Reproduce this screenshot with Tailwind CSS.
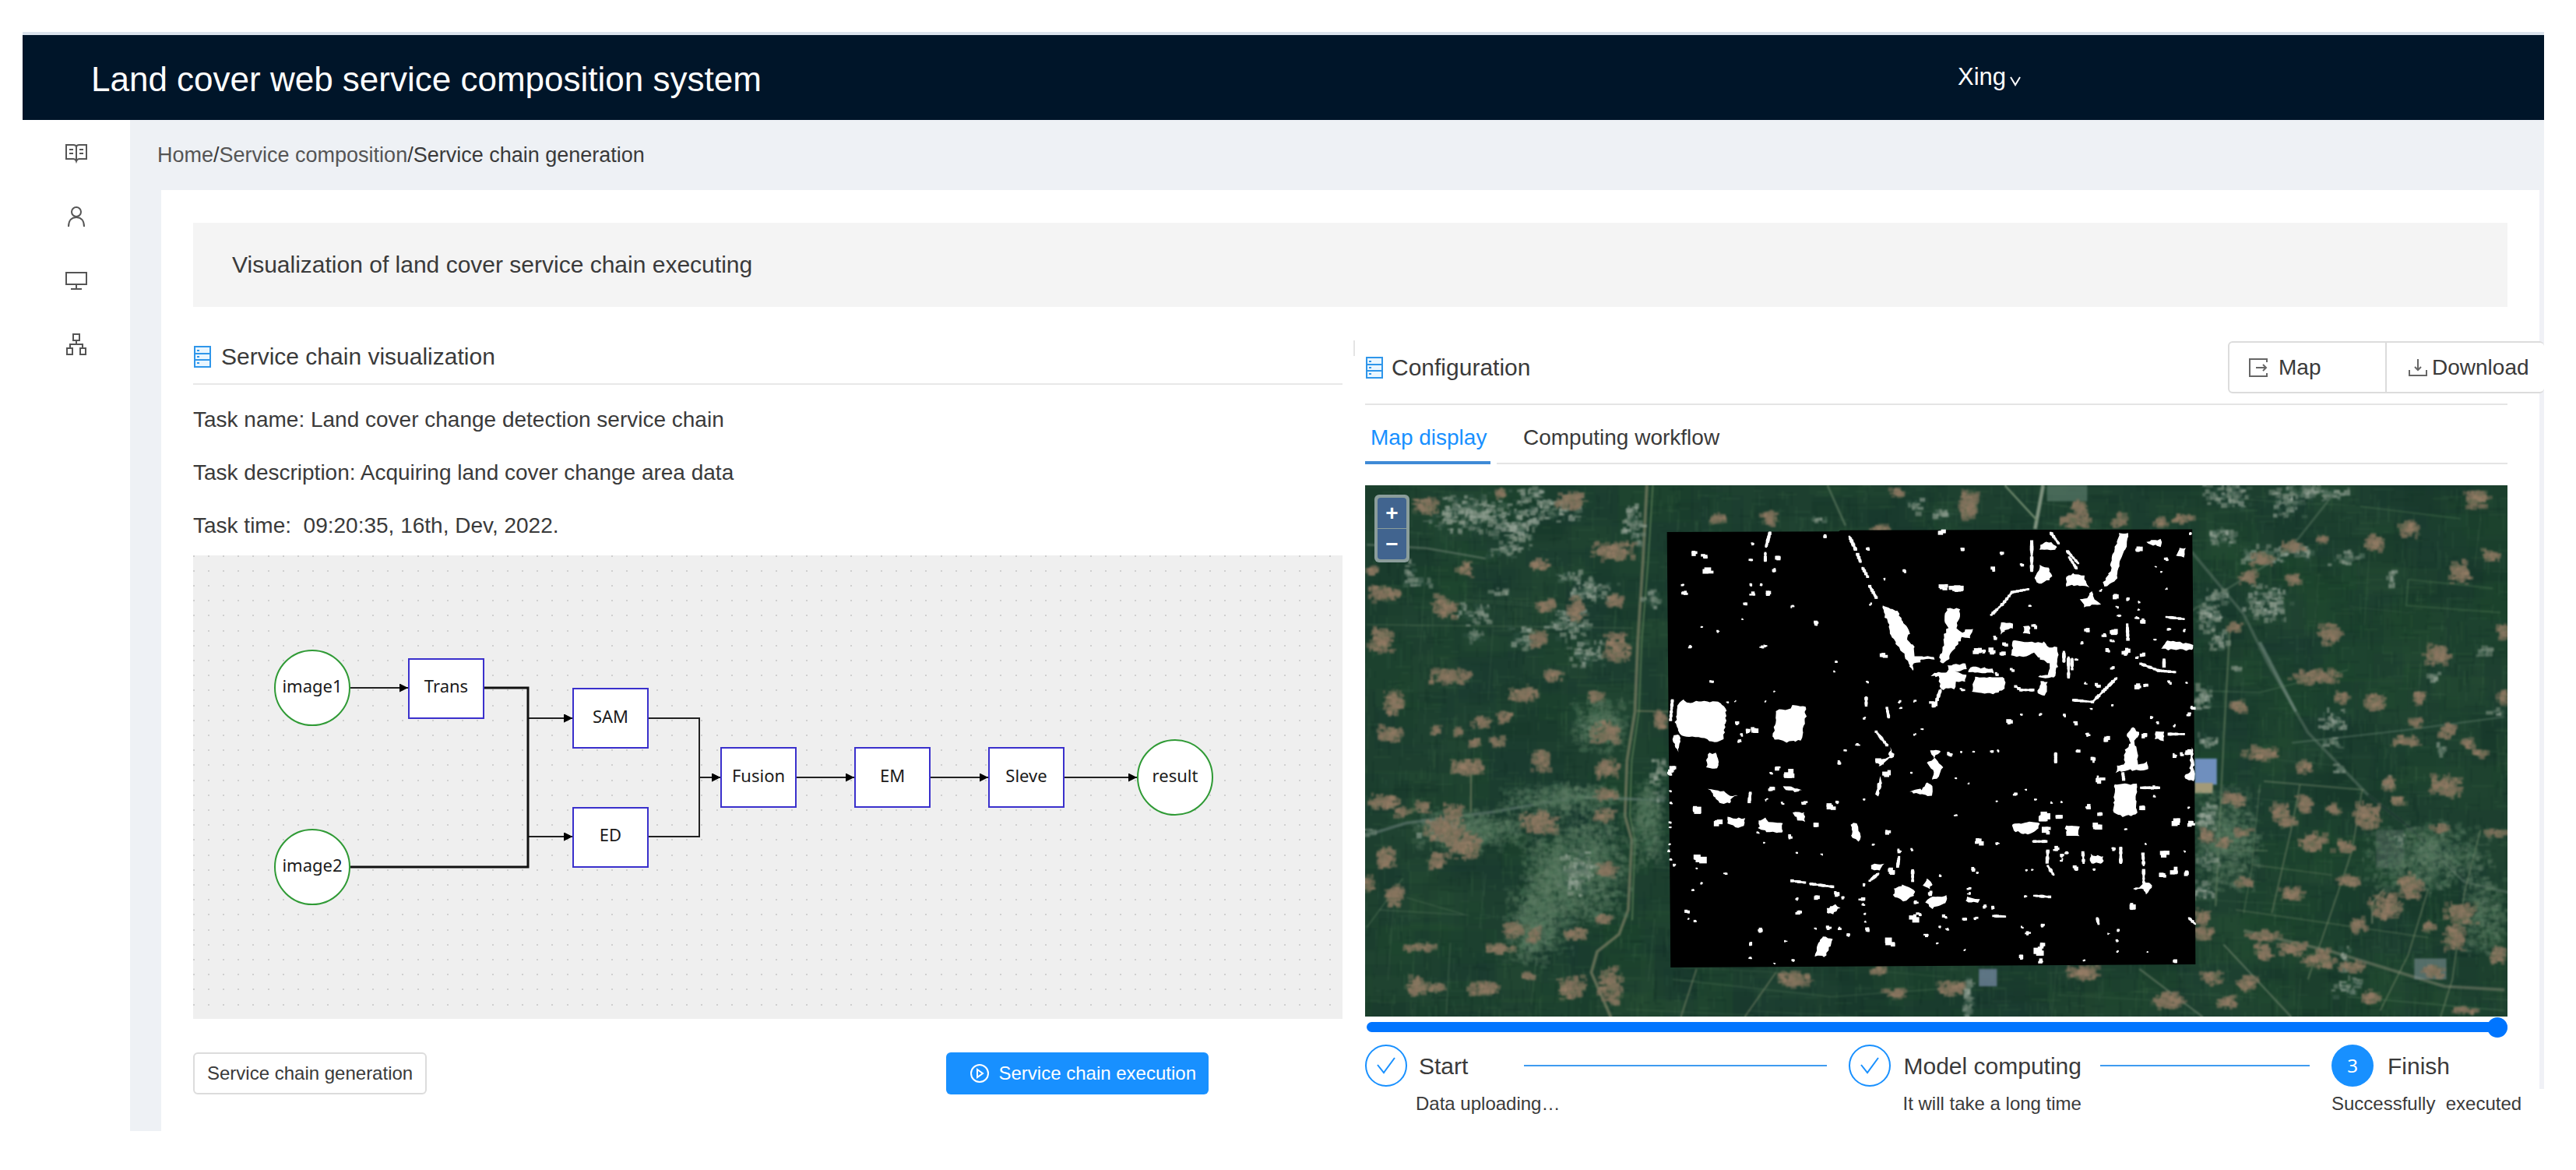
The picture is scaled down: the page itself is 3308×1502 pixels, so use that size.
<!DOCTYPE html>
<html lang="en">
  <head>
    <meta charset="UTF-8" />
    <meta name="viewport" content="width=device-width, initial-scale=1.0" />
    <title>Land cover web service composition system</title>
    <script src="https://cdn.jsdelivr.net/npm/@tailwindcss/browser@4"></script>
  </head>
  <body
    class="bg-white pt-[41px] pr-[41px] pl-[29px] font-['Liberation_Sans',Arial,sans-serif] text-[#3a3a3a]"
  >
    <header
      class="flex h-[113px] items-center justify-between border-t-4 border-[#dbe3ec] bg-[#001529] pr-[671px] pl-[88px] text-white"
    >
      <h1 class="pt-1 text-[44px]">Land cover web service composition system</h1>
      <button type="button" class="flex items-center gap-1 text-[31px]">
        Xing
        <svg class="mt-2 h-4 w-4" viewBox="0 0 16 16" fill="none" stroke="currentColor" stroke-width="2">
          <path d="M2 3l6 10 6-10" />
        </svg>
      </button>
    </header>

    <div class="flex">
      <!-- Sidebar -->
      <nav class="flex w-[138px] shrink-0 flex-col items-center gap-[54px] pt-7 text-[#555]">
        <a href="#" aria-label="Catalog">
          <svg class="size-7" viewBox="0 0 28 28" fill="none" stroke="currentColor" stroke-width="2">
            <path d="M1 4h9q4 0 4 3q0-3 4-3h9v18h-9q-3 0-4 3q-1-3-4-3H1zM14 7v17M5 10h5M5 15h5M18 10h5M18 15h5" />
          </svg>
        </a>
        <a href="#" aria-label="Users">
          <svg class="size-7" viewBox="0 0 28 28" fill="none" stroke="currentColor" stroke-width="2">
            <circle cx="14" cy="8" r="6" />
            <path d="M4 27c0-8 4-12 10-12s10 4 10 12" />
          </svg>
        </a>
        <a href="#" aria-label="Monitor">
          <svg class="size-7" viewBox="0 0 28 28" fill="none" stroke="currentColor" stroke-width="2">
            <path d="M1 4h26v15H1zM14 19v6M7 25h14" />
          </svg>
        </a>
        <a href="#" aria-label="Services">
          <svg class="size-7" viewBox="0 0 28 28" fill="none" stroke="currentColor" stroke-width="2">
            <path d="M10 1h8v8h-8zM2 19h7v8H2zM19 19h7v8h-7zM14 9v5M6 19v-5h16v5" />
          </svg>
        </a>
      </nav>

      <div class="min-w-0 flex-1">
        <div class="flex h-[90px] items-center bg-[#eef1f5] pl-[35px] text-[27px]">
          <a href="#" class="text-[#555]">Home</a>/<a href="#" class="text-[#555]">Service composition</a>/<span>Service chain generation</span>
        </div>

        <div class="flex">
          <div class="w-10 shrink-0 bg-[#eef1f5]"></div>
          <main class="min-w-0 flex-1 px-[41px] pt-[42px] pb-[21px]">
            <h2 class="bg-[#f4f4f4] px-[50px] text-[30px] leading-[108px]">
              Visualization of land cover service chain executing
            </h2>

            <div class="grid grid-cols-[1476fr_1467fr] gap-[29px]">
              <!-- Service chain -->
              <section class="min-w-0">
                <h3 class="flex items-center gap-3 border-b-2 border-[#e8e8e8] pt-[46px] pb-4 text-[30px] leading-9">
                  <svg class="h-7 w-6" viewBox="0 0 24 28" fill="none" stroke="#2f96ea" stroke-width="2">
                    <path d="M2 1h20v26H2zM2 10h20M2 18h20" fill="#eaf6ff" />
                    <path d="M5 6h3M5 14h3M5 22h3" />
                  </svg>
                  Service chain visualization
                </h3>
                <div class="pt-[11px] pb-1 text-[28px] leading-[68px]">
                  <p>Task name: Land cover change detection service chain</p>
                  <p>Task description: Acquiring land cover change area data</p>
                  <p>Task time:&nbsp; 09:20:35, 16th, Dev, 2022.</p>
                </div>
                <svg
                  class="block w-full font-['Noto_Sans',sans-serif] text-[22px]"
                  viewBox="0 0 1476 595"
                >
                  <defs>
                    <pattern id="dots" width="96" height="96" patternUnits="userSpaceOnUse">
                      <path
                        d="M0 1h96M0 20h96M0 39h96M0 58h96M0 77h96"
                        stroke="#cfcfcf"
                        stroke-width="2"
                        stroke-dasharray="2 17 2 17 2 17 2 17 2 18"
                      />
                    </pattern>
                    <marker id="arrow" viewBox="0 0 10 10" refX="10" refY="5" markerWidth="11" markerHeight="11" markerUnits="userSpaceOnUse" orient="auto">
                      <path d="M0 0L10 5L0 10z" />
                    </marker>
                  </defs>
                  <rect width="1476" height="595" fill="#efefef" />
                  <rect width="1476" height="595" fill="url(#dots)" />
                  <g fill="none" stroke="#222" stroke-width="2" marker-end="url(#arrow)">
                    <path d="M202 170H276" />
                    <path d="M373 170H430V209H487" />
                    <path d="M373 170H430V361H487" />
                    <path d="M202 400H430V209H487" />
                    <path d="M202 400H430V361H487" />
                    <path d="M584 209H650V285H677" />
                    <path d="M584 361H650V285H677" />
                    <path d="M774 285H849" />
                    <path d="M946 285H1021" />
                    <path d="M1118 285H1212" />
                  </g>
                  <path d="M373 170H430V400H202" fill="none" stroke="#111" stroke-width="3" />
                  <g fill="#fff" stroke="#2f9a35" stroke-width="2">
                    <circle cx="153" cy="170" r="48" />
                    <circle cx="153" cy="400" r="48" />
                    <circle cx="1261" cy="285" r="48" />
                  </g>
                  <g fill="#fff" stroke="#3a30cc" stroke-width="2">
                    <rect x="277" y="133" width="96" height="76" />
                    <rect x="488" y="171" width="96" height="76" />
                    <rect x="488" y="324" width="96" height="76" />
                    <rect x="678" y="247" width="96" height="76" />
                    <rect x="850" y="247" width="96" height="76" />
                    <rect x="1022" y="247" width="96" height="76" />
                  </g>
                  <g text-anchor="middle" fill="#1a1a1a">
                    <text x="153" y="176">image1</text>
                    <text x="153" y="406">image2</text>
                    <text x="325" y="176">Trans</text>
                    <text x="536" y="215">SAM</text>
                    <text x="536" y="367">ED</text>
                    <text x="726" y="291">Fusion</text>
                    <text x="898" y="291">EM</text>
                    <text x="1070" y="291">Sleve</text>
                    <text x="1261" y="291">result</text>
                  </g>
                </svg>
                <div class="mt-[43px] flex justify-between pr-[172px] text-[24px]">
                  <button type="button" class="h-[54px] rounded-md border-2 border-[#dcdcdc] px-4">
                    Service chain generation
                  </button>
                  <button type="button" class="flex h-[54px] items-center gap-3 rounded-md bg-[#1890ff] pr-4 pl-[30px] text-white">
                    <svg class="size-[26px]" viewBox="0 0 26 26" fill="none" stroke="currentColor" stroke-width="2">
                      <circle cx="13" cy="13" r="11" />
                      <path d="M10 8l7 5-7 5z" />
                    </svg>
                    Service chain execution
                  </button>
                </div>
              </section>

              <!-- Configuration -->
              <section class="relative min-w-0">
                <span class="absolute top-[43px] -left-[15px] h-5 w-[2px] bg-[#e4e4e4]"></span>
                <div class="flex items-center justify-between border-b-2 border-[#e4e4e4] pt-11 pb-[13px]">
                  <h3 class="flex items-center gap-[10px] text-[30px]">
                    <svg class="h-7 w-6" viewBox="0 0 24 28" fill="none" stroke="#2f96ea" stroke-width="2">
                      <path d="M2 1h20v26H2zM2 10h20M2 18h20" fill="#eaf6ff" />
                      <path d="M5 6h3M5 14h3M5 22h3" />
                    </svg>
                    Configuration
                  </h3>
                  <div class="relative -mr-[47px] flex h-[67px] text-[28px]">
                    <button type="button" class="flex w-[204px] items-center gap-[14px] rounded-l-md border-2 border-[#dcdcdc] bg-white pl-[25px]">
                      <svg class="size-6" viewBox="0 0 24 24" fill="none" stroke="#666" stroke-width="2">
                        <path d="M23 5V1H1v22h22v-4M9 12h13M18 8l4 4-4 4" />
                      </svg>
                      Map
                    </button>
                    <button type="button" class="flex w-[202px] items-center gap-[6px] rounded-r-md border-y-2 border-[#dcdcdc] bg-white pl-7">
                      <svg class="size-6" viewBox="0 0 24 24" fill="none" stroke="#666" stroke-width="2">
                        <path d="M12 1v14M8 11l4 4 4-4M1 15v7h22v-7" />
                      </svg>
                      Download
                    </button>
                  </div>
                </div>

                <nav class="flex text-[28px] leading-9">
                  <a href="#" class="w-[161px] border-b-4 border-[#3f8ad6] pt-6 pb-3 pl-[7px] whitespace-nowrap text-[#1890ff]">Map display</a>
                  <div class="ml-2 flex-1 border-b-2 border-[#e4e4e4] pt-6 pl-[34px]">
                    <a href="#">Computing workflow</a>
                  </div>
                </nav>

                <div class="relative mt-[27px]">
                  <canvas id="map" class="block w-full" width="1467" height="682"></canvas>
                  <div class="absolute top-3 left-3 flex w-[45px] flex-col gap-px rounded-md bg-[#8b9d9b] p-1 text-[28px] leading-[38px] font-bold text-white">
                    <button type="button" class="h-[39px] rounded-t-sm bg-[#41648f]">+</button>
                    <button type="button" class="h-[39px] rounded-b-sm bg-[#41648f]">−</button>
                  </div>
                </div>

                <input
                  type="range"
                  aria-label="Progress"
                  value="100"
                  class="mt-[7px] ml-[2px] block h-[13px] w-[calc(100%-2px)] appearance-none rounded-full bg-[#0075ff] [&::-webkit-slider-thumb]:size-[26px] [&::-webkit-slider-thumb]:appearance-none [&::-webkit-slider-thumb]:rounded-full [&::-webkit-slider-thumb]:bg-[#0075ff]"
                />

                <ol class="mt-4 flex text-[30px] whitespace-nowrap">
                  <li class="flex-1">
                    <div class="flex items-center">
                      <svg class="size-[54px]" viewBox="0 0 54 54" fill="none" stroke="#1890ff" stroke-width="2">
                        <circle cx="27" cy="27" r="26" />
                        <path d="M16 26l8 10 14-19" />
                      </svg>
                      <span class="ml-[15px]">Start</span>
                      <span class="mr-7 ml-[72px] h-[2px] flex-1 bg-[#3f9bf0]"></span>
                    </div>
                    <p class="mt-2 pl-[65px] text-[24px] leading-7">Data uploading…</p>
                  </li>
                  <li class="flex-1">
                    <div class="flex items-center">
                      <svg class="size-[54px]" viewBox="0 0 54 54" fill="none" stroke="#1890ff" stroke-width="2">
                        <circle cx="27" cy="27" r="26" />
                        <path d="M16 26l8 10 14-19" />
                      </svg>
                      <span class="ml-[17px]">Model computing</span>
                      <span class="mr-7 ml-6 h-[2px] flex-1 bg-[#3f9bf0]"></span>
                    </div>
                    <p class="mt-2 pl-[70px] text-[24px] leading-7">It will take a long time</p>
                  </li>
                  <li class="w-[226px]">
                    <div class="flex items-center">
                      <span class="flex size-[54px] items-center justify-center rounded-full bg-[#1890ff] font-['Noto_Sans',sans-serif] text-[24px] text-white">3</span>
                      <span class="ml-[18px]">Finish</span>
                    </div>
                    <p class="mt-2 text-[24px] leading-7">Successfully&nbsp; executed</p>
                  </li>
                </ol>
              </section>
            </div>
          </main>
          <div class="mb-[54px] w-[6px] shrink-0 bg-[#f0f1f6]"></div>
        </div>
      </div>
    </div>

    <script>
      const canvas = document.getElementById("map");
      const ctx = canvas.getContext("2d");

      // Seeded generator, so the imagery is the same on every load
      let seed = 7;
      function rnd() {
        seed = (seed * 16807) % 2147483647;
        return seed / 2147483647;
      }

      function line(points, color, width) {
        ctx.strokeStyle = color;
        ctx.lineWidth = width;
        ctx.beginPath();
        for (let i = 0; i < points.length; i += 2) ctx.lineTo(points[i], points[i + 1]);
        ctx.stroke();
      }

      // Cluster of small roofs, denser towards its centre
      function cluster([x, y, w, h], colors, density) {
        const n = Math.max(10, (w * h * density) / 45);
        for (let i = 0; i < n; i++) {
          ctx.fillStyle = colors[Math.floor(rnd() * colors.length)];
          const cw = 5 + rnd() * 13;
          const ch = 5 + rnd() * 12;
          const cx = x + (rnd() + rnd() - 1) * w * 0.55;
          const cy = y + (rnd() + rnd() - 1) * h * 0.55;
          ctx.fillRect(cx - cw / 2, cy - ch / 2, cw, ch);
        }
      }

      const brown = ["#8a755f80", "#917a6480", "#7f705b80", "#756b5680", "#9a7f6880", "#84755f80", "#5f6b5060"];
      const grey = ["#73877690", "#8a9a8a90", "#61786a80", "#a0aba090", "#4c6c5870", "#2c4f3f80"];
      const haze = ["#4f755c38", "#5e806538", "#47685038", "#6d8a7038"];

      // Farmland
      ctx.fillStyle = "#1d3f2f";
      ctx.fillRect(0, 0, 1467, 682);
      for (let i = 0; i < 1000; i++) {
        ctx.fillStyle = ["#16352b50", "#22493240", "#183a3050", "#28503540", "#1b472a40"][i % 5];
        ctx.fillRect(rnd() * 1500 - 40, rnd() * 720 - 40, 20 + rnd() * 80, 15 + rnd() * 60);
      }
      for (let i = 0; i < 6000; i++) {
        ctx.fillStyle = ["#3a664a38", "#0f2c2240", "#44704c30", "#13352840"][i % 4];
        const long = 6 + rnd() * 22;
        if (rnd() < 0.65) ctx.fillRect(rnd() * 1467, rnd() * 682, 2, long);
        else ctx.fillRect(rnd() * 1467, rnd() * 682, long, 2);
      }
      for (let i = 0; i < 60; i++) {
        const x = rnd() * 1467;
        const y = rnd() * 682;
        if (rnd() < 0.5) line([x, y, x - 8, y + 60 + rnd() * 90], "#56795a50", 1);
        else line([x, y, x + 60 + rnd() * 110, y + 8], "#56795a50", 1);
      }

      // West tile
      ctx.setTransform(0.51, 0, 0, 0.4464, -13, -13);
      line([735, 30, 725, 250, 712, 480, 705, 680, 685, 820, 680, 980, 697, 1050, 688, 1250, 665, 1320, 610, 1370, 595, 1430, 645, 1560], "#7d8064b0", 8);
      line([750, 30, 738, 250, 722, 480, 715, 680, 697, 820, 692, 980, 705, 1050, 698, 1280], "#4c6f4c", 4);
      line([30, 1035, 130, 1000, 350, 968, 560, 925, 780, 935], "#71868280", 9);
      line([30, 200, 180, 210, 330, 240], "#81918170", 6);
      line([30, 430, 400, 435, 700, 440], "#62806070", 3);
      line([1190, 30, 1235, 145], "#6e886c90", 5);
      line([292, 860, 292, 970], "#8a8a6a90", 4);
      line([710, 678, 790, 680], "#8a8a6aa0", 4);
      line([130, 1215, 280, 1265, 60, 1250], "#64836460", 3);
      line([30, 1300, 120, 1160], "#64836470", 3);
      line([240, 1345, 230, 1550], "#64836460", 3);
      line([860, 1420, 820, 1560], "#8b927280", 4);
      line([1060, 1430, 980, 1560], "#8b927280", 4);
      line([800, 1450, 1200, 1500, 1560, 1470], "#5e806060", 3);
      [[490, 1200, 140, 340], [580, 1130, 220, 320], [620, 720, 140, 160], [440, 1300, 120, 220], [740, 1000, 80, 260], [520, 930, 300, 90], [300, 1020, 300, 120]].forEach((b) => cluster(b, haze, 1));
      [
        [400, 150, 120, 130], [370, 215, 90, 50], [160, 310, 80, 40], [140, 280, 30, 80], [300, 400, 90, 60],
        [440, 60, 110, 50], [540, 290, 60, 50], [360, 335, 60, 20], [750, 360, 50, 60], [700, 140, 50, 130],
        [250, 125, 160, 60], [540, 430, 110, 100], [600, 330, 120, 80], [590, 520, 100, 80], [420, 470, 70, 70],
        [1410, 90, 60, 40], [1480, 110, 60, 30], [1170, 130, 40, 15], [40, 1030, 60, 30], [210, 1020, 110, 60],
        [765, 850, 40, 90], [560, 1150, 90, 140], [300, 460, 60, 40], [1545, 1500, 25, 130], [770, 920, 30, 40],
        [300, 110, 180, 120], [500, 100, 150, 80],
      ].forEach((b) => cluster(b, grey, 0.35));
      [
        [180, 90, 60, 50], [370, 50, 30, 30], [545, 75, 70, 50], [915, 125, 40, 30], [1045, 125, 40, 45],
        [1365, 50, 35, 25], [1545, 85, 45, 70], [650, 220, 110, 55], [275, 270, 40, 45], [465, 260, 50, 35],
        [45, 275, 25, 30], [75, 340, 80, 45], [230, 380, 65, 65], [480, 375, 55, 30], [558, 385, 45, 70],
        [655, 362, 40, 35], [65, 475, 60, 75], [465, 470, 45, 50], [660, 495, 65, 90], [240, 580, 110, 40],
        [500, 575, 50, 35], [425, 630, 80, 45], [605, 637, 45, 35], [98, 655, 50, 75], [375, 697, 35, 30],
        [318, 710, 50, 35], [205, 733, 28, 28], [260, 740, 22, 28], [88, 745, 65, 45], [630, 740, 75, 65],
        [360, 767, 40, 30], [300, 770, 35, 25], [470, 820, 45, 60], [280, 840, 85, 50], [635, 845, 60, 55],
        [75, 940, 80, 45], [120, 970, 40, 30], [165, 955, 40, 30], [250, 970, 50, 50], [225, 1020, 100, 70],
        [275, 1065, 90, 80], [465, 1000, 100, 65], [75, 1100, 50, 65], [205, 1110, 40, 50], [635, 1135, 50, 45],
        [630, 980, 50, 40], [35, 1175, 25, 50], [100, 1210, 45, 60], [630, 1280, 40, 30], [398, 1308, 50, 45],
        [450, 1320, 35, 50], [555, 1320, 60, 35], [170, 1358, 90, 25], [360, 1362, 90, 25], [440, 1440, 35, 20],
        [325, 1475, 75, 45], [155, 1470, 50, 60], [205, 1475, 50, 25], [550, 1475, 70, 70], [645, 1470, 60, 100],
        [1105, 1450, 95, 45], [1320, 1425, 55, 25], [1360, 1490, 60, 30], [1500, 1475, 65, 40], [770, 705, 35, 50],
        [1325, 150, 50, 20], [635, 920, 60, 30],
      ].forEach((b) => cluster(b, brown, 1.1));

      // East tile
      ctx.setTransform(0.5153, 0, 0, 0.4464, 747, -13);
      line([610, 220, 740, 400, 800, 540, 900, 740, 1050, 920, 1150, 1010, 1290, 1170, 1400, 1200], "#5f786a80", 8);
      line([780, 480, 870, 680], "#839a9080", 8);
      line([1050, 920, 1150, 1010, 1290, 1160], "#1d3a30", 7);
      line([240, 30, 220, 155], "#7f927f", 9);
      line([145, 30, 225, 130], "#6e886c", 5);
      line([610, 390, 850, 220, 960, 60], "#6c877060", 6);
      line([705, 450, 690, 760, 670, 1240], "#728a6880", 5);
      line([620, 620, 780, 625, 1000, 560], "#5e806070", 3);
      line([860, 770, 1130, 735, 1390, 695], "#5e7c6980", 5);
      line([790, 880, 1040, 905], "#74876c80", 5);
      line([1150, 300, 1145, 375, 1380, 395], "#53795570", 4);
      line([1150, 300, 1360, 325], "#53795570", 4);
      line([1030, 90, 1280, 125], "#53795570", 4);
      line([880, 890, 860, 1010, 810, 1260], "#7a8a6a80", 4);
      line([1035, 905, 1010, 1080, 960, 1250, 900, 1450], "#7a8a6a80", 4);
      line([780, 890, 760, 1130, 740, 1260], "#6c836470", 3);
      line([1200, 1190, 1150, 1380, 1080, 1540], "#7a8a6a80", 4);
      line([1330, 1020, 1290, 1200, 1260, 1450, 1230, 1560], "#7a8a6a80", 4);
      line([760, 1120, 960, 1150], "#6c836480", 3);
      line([690, 1080, 800, 1080], "#6c836480", 4);
      line([720, 1250, 1200, 1330], "#6c836480", 3);
      line([690, 1350, 860, 1560], "#7f8f7780", 5);
      line([480, 1420, 640, 1560], "#7f8f7780", 5);
      line([740, 1310, 960, 1370, 1240, 1470, 1390, 1480], "#84887280", 9);
      line([1000, 1500, 1390, 1540], "#5e806080", 3);
      line([1060, 1290, 1060, 1230, 1090, 1190], "#90967c80", 5);
      ctx.fillStyle = "#4d5d5890";
      ctx.fillRect(1070, 1020, 70, 110);
      ctx.fillStyle = "#7f919690";
      ctx.fillRect(1165, 1390, 80, 60);
      ctx.fillStyle = "#6f8fbe";
      ctx.fillRect(618, 815, 55, 75);
      ctx.fillStyle = "#a39a78";
      ctx.fillRect(618, 885, 45, 30);
      ctx.fillStyle = "#8594b8a0";
      ctx.fillRect(80, 1420, 45, 50);
      ctx.fillStyle = "#5f7f70a0";
      ctx.fillRect(250, 30, 100, 45);
      [[1340, 1270, 110, 220], [1200, 1100, 300, 200], [700, 1050, 160, 300]].forEach((b) => cluster(b, haze, 0.8));
      [
        [920, 50, 160, 50], [850, 80, 80, 90], [690, 180, 90, 50], [800, 370, 120, 110], [650, 400, 60, 110],
        [790, 230, 110, 60], [880, 220, 80, 40], [640, 640, 50, 80], [650, 765, 50, 40], [960, 770, 40, 35],
        [980, 845, 35, 25], [960, 705, 80, 60], [680, 480, 50, 60], [720, 555, 25, 20], [1210, 580, 40, 30],
        [1110, 300, 20, 60], [650, 980, 60, 80], [1370, 680, 45, 25], [1130, 1050, 25, 60], [640, 1200, 50, 70],
        [700, 60, 120, 80], [1230, 790, 20, 30], [1100, 885, 25, 40], [650, 1110, 60, 60], [1000, 1470, 70, 60],
        [1000, 240, 90, 40], [1340, 510, 40, 40], [990, 1390, 30, 80], [680, 350, 60, 50], [50, 1520, 30, 90],
      ].forEach((b) => cluster(b, grey, 0.4));
      [
        [55, 85, 45, 85], [320, 130, 80, 40], [330, 90, 40, 35], [430, 130, 35, 40], [530, 135, 40, 25],
        [590, 125, 50, 25], [1320, 70, 65, 50], [1155, 155, 50, 50], [1065, 195, 50, 50], [935, 185, 30, 25],
        [860, 205, 60, 30], [785, 240, 60, 40], [750, 295, 50, 40], [862, 298, 40, 30], [1280, 280, 50, 65],
        [1355, 230, 40, 35], [955, 455, 60, 60], [1225, 515, 65, 60], [1385, 450, 30, 50], [920, 580, 130, 40],
        [718, 440, 35, 30], [730, 665, 50, 35], [1068, 655, 50, 55], [985, 640, 35, 40], [1178, 640, 30, 40],
        [1385, 640, 25, 40], [1170, 712, 35, 25], [1248, 735, 40, 45], [1145, 765, 80, 30], [1298, 772, 30, 30],
        [1330, 800, 40, 20], [780, 800, 85, 40], [890, 840, 40, 35], [1245, 895, 80, 65], [1102, 885, 30, 45],
        [1125, 935, 40, 25], [715, 932, 65, 38], [890, 945, 40, 50], [830, 970, 45, 60], [850, 1000, 50, 30],
        [965, 960, 35, 30], [1050, 980, 70, 75], [1230, 1015, 45, 25], [910, 1055, 70, 55], [990, 1070, 55, 40],
        [645, 1035, 45, 40], [690, 1060, 35, 30], [735, 1030, 50, 25], [1370, 1030, 60, 25], [740, 1170, 50, 30],
        [1000, 1170, 60, 35], [1155, 1185, 60, 80], [1095, 1240, 80, 70], [860, 1205, 60, 35], [1025, 1295, 45, 45],
        [1280, 1260, 80, 60], [1265, 1330, 50, 80], [1205, 1300, 30, 30], [635, 1270, 40, 50], [640, 1320, 50, 40],
        [790, 1325, 90, 30], [790, 1370, 45, 45], [860, 1360, 80, 40], [930, 1390, 80, 50], [1010, 1415, 60, 30],
        [1375, 1380, 40, 50], [660, 1445, 50, 40], [750, 1460, 50, 45], [700, 1515, 50, 35], [550, 1510, 80, 45],
        [340, 1430, 90, 40], [1055, 1500, 45, 40], [1290, 1540, 60, 20], [20, 1475, 40, 35], [1210, 1425, 60, 40],
      ].forEach((b) => cluster(b, brown, 1.1));

      // Satellite imagery is soft at this zoom level
      ctx.setTransform(1, 0, 0, 1, 0, 0);
      ctx.filter = "blur(1px)";
      ctx.drawImage(canvas, 0, 0);
      ctx.filter = "none";

      // Change detection result
      ctx.setTransform(0.4592, 0, 0, 0.3827, 367, 37);
      ctx.fillStyle = "#000";
      ctx.beginPath();
      [[45, 60], [525, 58], [530, 54], [1514, 51], [1520, 800], [1523, 1510], [55, 1521]].forEach((p) => ctx.lineTo(p[0], p[1]));
      ctx.fill();

      ctx.fillStyle = "#fff";
      // Larger areas, as outlines
      [
        [75, 640, 90, 622, 100, 632, 150, 626, 195, 632, 210, 650, 208, 700, 202, 758, 180, 768, 150, 752, 85, 742, 68, 705],
        [352, 658, 385, 656, 395, 643, 432, 645, 433, 685, 424, 725, 422, 760, 380, 764, 340, 752, 346, 715],
        [62, 742, 82, 742, 82, 765, 76, 798, 70, 785, 64, 765],
        [165, 802, 186, 804, 190, 830, 186, 852, 156, 852, 157, 820],
        [648, 308, 690, 325, 705, 360, 722, 400, 718, 422, 735, 445, 740, 475, 790, 478, 792, 486, 755, 486, 752, 495, 735, 500, 730, 526, 720, 500, 708, 470, 690, 440, 668, 400, 665, 370, 655, 345],
        [828, 316, 862, 318, 862, 350, 855, 385, 870, 398, 885, 385, 902, 388, 892, 418, 870, 412, 862, 430, 845, 455, 832, 490, 812, 502, 808, 480, 820, 440, 820, 405, 830, 380, 820, 355],
        [830, 505, 880, 502, 882, 522, 850, 528, 880, 540, 878, 560, 852, 562, 848, 585, 808, 588, 805, 545, 785, 545, 790, 532, 830, 530],
        [892, 512, 955, 518, 960, 535, 890, 530],
        [905, 545, 990, 550, 988, 585, 965, 602, 900, 598],
        [1010, 425, 1060, 430, 1100, 430, 1112, 445, 1138, 445, 1138, 510, 1128, 548, 1085, 548, 1086, 540, 1110, 538, 1118, 500, 1090, 490, 1072, 465, 1040, 480, 1010, 475],
        [1090, 560, 1108, 565, 1108, 595, 1098, 612, 1080, 600],
        [1105, 92, 1122, 95, 1137, 112, 1128, 120, 1085, 118, 1088, 102],
        [1090, 172, 1110, 180, 1122, 208, 1108, 225, 1085, 235, 1072, 212],
        [1180, 198, 1210, 208, 1225, 245, 1205, 238, 1160, 240, 1162, 212],
        [1310, 66, 1336, 66, 1332, 100, 1312, 150, 1302, 215, 1290, 232, 1268, 242, 1266, 228, 1285, 190, 1290, 140],
        [1232, 260, 1242, 285, 1256, 302, 1232, 305, 1212, 312, 1202, 288, 1220, 280],
        [1446, 422, 1480, 430, 1515, 438, 1515, 456, 1428, 454],
        [1296, 905, 1358, 906, 1358, 1008, 1320, 1014, 1294, 1002],
        [1012, 1040, 1085, 1032, 1086, 1055, 1055, 1076, 1012, 1062],
        [1160, 1046, 1198, 1046, 1198, 1082, 1162, 1082],
        [1230, 1142, 1266, 1148, 1264, 1172, 1230, 1170],
        [1350, 712, 1368, 740, 1350, 765, 1362, 808, 1362, 838, 1390, 830, 1392, 855, 1370, 862, 1340, 858, 1302, 865, 1302, 845, 1325, 840, 1325, 790, 1342, 768, 1330, 738],
        [1410, 730, 1434, 732, 1432, 760, 1412, 752],
        [320, 1018, 330, 1034, 370, 1038, 366, 1070, 325, 1064, 302, 1052, 304, 1030],
        [160, 922, 210, 932, 222, 945, 244, 945, 222, 955, 220, 970, 190, 968, 175, 945],
        [215, 1018, 262, 1020, 258, 1045, 240, 1052, 215, 1038],
        [395, 1000, 430, 1000, 430, 1032, 412, 1025],
        [372, 910, 392, 916, 424, 926, 412, 932, 378, 924],
        [780, 790, 812, 795, 790, 815, 816, 850, 802, 890, 788, 890, 790, 860, 770, 832, 795, 820],
        [770, 898, 790, 912, 785, 944, 750, 940, 722, 932, 735, 922, 760, 925],
        [672, 782, 680, 815, 655, 828, 640, 848, 632, 828, 665, 815],
        [640, 880, 648, 900, 635, 945, 628, 940],
        [562, 1035, 575, 1040, 588, 1085, 580, 1098, 560, 1080],
        [680, 1258, 705, 1245, 738, 1258, 735, 1282, 705, 1298, 678, 1278],
        [772, 1222, 790, 1240, 778, 1256, 762, 1245],
        [778, 1285, 828, 1280, 826, 1305, 785, 1322, 770, 1300],
        [885, 1285, 922, 1292, 912, 1305, 880, 1298],
        [490, 1322, 515, 1310, 528, 1320, 510, 1342, 492, 1338],
        [482, 1415, 508, 1428, 498, 1455, 485, 1486, 460, 1482, 466, 1440],
        [615, 1175, 650, 1172, 640, 1195, 618, 1192],
        [1380, 1228, 1404, 1248, 1385, 1275, 1378, 1258, 1350, 1258, 1370, 1248],
        [1515, 780, 1520, 895, 1492, 888, 1495, 875, 1508, 868, 1508, 800],
        [1385, 92, 1402, 88, 1428, 84, 1425, 108, 1405, 104],
        [1480, 112, 1496, 115, 1490, 145, 1470, 140],
        [978, 365, 1010, 365, 1010, 382, 992, 388, 978, 402],
        [1042, 375, 1060, 378, 1058, 405, 1042, 400],
      ].forEach((p) => {
        ctx.beginPath();
        for (let i = 0; i < p.length; i += 2) {
          const dx = p[(i + 2) % p.length] - p[i];
          const dy = p[(i + 3) % p.length] - p[i + 1];
          const steps = Math.ceil(Math.hypot(dx, dy) / 9);
          for (let k = 0; k < steps; k++) {
            ctx.lineTo(p[i] + (dx * k) / steps + rnd() * 6 - 3, p[i + 1] + (dy * k) / steps + rnd() * 6 - 3);
          }
        }
        ctx.fill();
      });

      // Roads and field edges
      [
        [333, 62, 322, 110], [320, 130, 320, 156], [555, 75, 572, 118], [578, 135, 586, 160], [592, 180, 606, 210],
        [612, 242, 630, 280], [1065, 92, 1065, 190], [1118, 62, 1140, 98], [1165, 125, 1195, 165],
        [952, 338, 985, 300, 1010, 262, 1055, 252], [1168, 480, 1168, 548], [1155, 462, 1155, 495], [1178, 485, 1178, 520],
        [1182, 624, 1235, 630, 1302, 550], [1370, 502, 1420, 525, 1465, 530], [1020, 578, 1035, 590, 1068, 590],
        [1435, 488, 1435, 510], [1372, 918, 1420, 918], [1070, 1098, 1105, 1098], [395, 1230, 430, 1236],
        [445, 1240, 508, 1250], [630, 730, 660, 775], [602, 615, 602, 642], [660, 650, 665, 682], [612, 1230, 636, 1206],
        [732, 1195, 732, 1230], [694, 1150, 690, 1182], [1376, 1140, 1378, 1178], [1378, 1195, 1378, 1235],
        [1072, 1280, 1115, 1284], [1314, 1120, 1314, 1170], [1505, 1355, 1522, 1375], [1248, 1355, 1252, 1375],
        [1170, 145, 1190, 182], [1450, 738, 1490, 738], [1442, 345, 1490, 352], [60, 625, 55, 690], [810, 590, 795, 640],
        [1132, 802, 1132, 832], [278, 935, 275, 965], [1110, 1130, 1108, 1168], [1208, 1135, 1210, 1170], [958, 1348, 990, 1350],
        [1110, 1180, 1126, 1210], [1320, 870, 1322, 890], [1332, 370, 1334, 420],
      ].forEach((p) => {
        for (let i = 0; i + 3 < p.length; i += 2) {
          const dx = p[i + 2] - p[i];
          const dy = p[i + 3] - p[i + 1];
          const steps = Math.ceil(Math.hypot(dx, dy) / 4);
          for (let k = 0; k <= steps; k++) {
            const s = 5 + rnd() * 5;
            ctx.fillRect(p[i] + (dx * k) / steps - s / 2, p[i + 1] + (dy * k) / steps - s / 2, s, s);
          }
        }
      });

      // Single spots: x, y, size
      [
        [123, 132, 16], [150, 142, 14], [160, 188, 22], [88, 236, 9], [94, 265, 14], [286, 100, 9], [278, 154, 11], [358, 146, 18],
        [342, 188, 12], [280, 238, 10], [308, 236, 8], [284, 266, 14], [328, 268, 15], [266, 298, 12], [396, 308, 10], [256, 352, 6],
        [484, 74, 11], [606, 118, 9], [652, 218, 7], [708, 190, 12], [872, 119, 12], [815, 62, 16], [982, 132, 11], [820, 244, 22],
        [848, 250, 20], [862, 252, 20], [960, 184, 14], [1036, 172, 10], [143, 378, 6], [188, 394, 8], [108, 445, 10], [310, 446, 10],
        [320, 442, 10], [464, 366, 12], [520, 496, 8], [514, 528, 6], [650, 475, 16], [170, 560, 10], [345, 594, 5], [605, 563, 8],
        [236, 628, 5], [214, 630, 7], [320, 628, 5], [614, 302, 7], [245, 700, 14], [270, 728, 12], [290, 722, 18], [248, 762, 10],
        [255, 740, 9], [60, 856, 18], [52, 870, 10], [356, 850, 14], [336, 868, 8], [388, 870, 24], [336, 922, 16], [324, 958, 8],
        [430, 970, 14], [504, 980, 20], [522, 965, 10], [368, 970, 8], [128, 990, 26], [190, 1038, 20], [456, 1040, 18], [392, 1084, 14],
        [318, 1102, 6], [300, 1070, 7], [138, 1158, 26], [66, 1178, 7], [56, 1158, 7], [208, 1205, 9], [128, 1190, 6], [142, 1238, 7],
        [118, 1260, 8], [102, 1334, 12], [126, 1366, 9], [104, 1358, 5], [406, 1134, 8], [478, 1142, 6], [408, 1292, 8], [466, 1284, 14],
        [412, 1334, 16], [520, 1275, 14], [536, 1288, 10], [594, 1244, 9], [590, 1290, 14], [594, 1310, 8], [598, 1340, 6], [600, 1368, 6],
        [604, 1394, 13], [308, 1398, 16], [276, 1440, 13], [376, 1432, 8], [278, 1488, 8], [398, 1498, 8], [345, 1508, 5], [460, 1390, 8],
        [498, 1388, 12], [528, 1390, 9], [550, 1412, 10], [578, 772, 10], [544, 794, 8], [526, 832, 13], [596, 684, 8], [640, 832, 20],
        [660, 872, 20], [696, 630, 8], [698, 650, 8], [738, 628, 7], [788, 636, 18], [738, 740, 7], [758, 722, 7], [836, 804, 13],
        [868, 798, 6], [902, 796, 6], [954, 796, 9], [970, 794, 8], [728, 868, 7], [852, 886, 7], [888, 904, 5], [852, 1010, 8],
        [596, 956, 7], [662, 1066, 14], [622, 1110, 8], [728, 1126, 8], [694, 1130, 12], [674, 1198, 20], [780, 1272, 14],
        [808, 1212, 8], [900, 1194, 14], [914, 1202, 8], [890, 1256, 10], [890, 1272, 9], [936, 1316, 12], [954, 1320, 12], [735, 1358, 22],
        [750, 1342, 12], [742, 1302, 12], [670, 1438, 24], [770, 1412, 12], [800, 1440, 6], [822, 1352, 12], [878, 1360, 12], [908, 1356, 10],
        [808, 1385, 7], [830, 1392, 9], [878, 1462, 6], [918, 1098, 22], [970, 1104, 9], [1018, 940, 12], [1048, 924, 6], [968, 964, 6],
        [1002, 698, 16], [1036, 672, 7], [1090, 672, 8], [1156, 676, 9], [1186, 702, 12], [1222, 740, 12], [1274, 756, 16], [1196, 792, 12],
        [1236, 824, 13], [1256, 892, 20], [1248, 884, 10], [1224, 982, 14], [1258, 1008, 14], [1100, 1018, 26], [1140, 1016, 18], [1108, 1062, 22],
        [1248, 1050, 24], [1328, 1056, 7], [1134, 1122, 14], [1152, 1146, 12], [1162, 1138, 10], [1150, 1160, 10], [1188, 1186, 14], [1294, 1124, 10],
        [1384, 1106, 6], [1438, 1140, 20], [1464, 1196, 20], [1432, 1212, 16], [1494, 1204, 14], [1470, 1034, 22], [1510, 1038, 16], [1374, 986, 16],
        [1404, 918, 12], [1408, 946, 8], [1504, 986, 7], [1482, 804, 12], [1500, 798, 20], [1466, 810, 12], [1382, 742, 18], [1464, 710, 8],
        [1400, 682, 9], [1416, 700, 9], [1506, 672, 12], [1516, 650, 12], [1290, 640, 7], [1232, 652, 7], [1216, 568, 7], [1250, 576, 14],
        [1362, 576, 18], [1384, 574, 12], [1452, 564, 12], [1498, 566, 6], [1292, 516, 10], [1278, 458, 15], [1328, 460, 20], [1296, 396, 24],
        [1268, 408, 12], [1220, 390, 12], [1290, 424, 10], [1206, 432, 8], [1310, 342, 10], [1304, 312, 7], [1300, 278, 16], [1332, 284, 11],
        [1364, 296, 7], [1364, 320, 7], [1376, 358, 18], [1360, 350, 10], [1374, 470, 14], [1362, 482, 10], [1450, 388, 10], [1490, 390, 8],
        [1410, 420, 7], [1362, 122, 20], [1442, 152, 10], [1412, 176, 5], [1428, 195, 6], [1442, 250, 6], [1060, 306, 9], [1074, 378, 14],
        [914, 460, 20], [930, 462, 14], [952, 462, 20], [986, 468, 16], [990, 436, 12], [960, 414, 12], [1190, 490, 8], [1010, 522, 10],
        [968, 536, 10], [870, 590, 12], [1050, 1196, 7], [1066, 1194, 6], [1240, 1192, 8], [1048, 1280, 9], [1346, 1318, 20], [1306, 1396, 9],
        [1280, 1408, 6], [1304, 1432, 8], [1306, 1468, 6], [1390, 1468, 5], [1054, 1408, 14], [1096, 1380, 10], [1038, 1386, 8], [1094, 1448, 18],
        [1082, 1466, 24], [1034, 1486, 16], [1088, 1500, 14], [1212, 1498, 7], [1464, 1500, 12], [1076, 958, 6], [1120, 968, 7], [1148, 965, 6],
        [56, 930, 8], [56, 970, 8], [54, 1035, 7], [54, 1050, 7], [52, 1108, 6], [50, 1130, 7], [1510, 66, 8], [1492, 1132, 6], [1258, 256, 8],
      ].forEach(([x, y, s]) => {
        for (let i = 0; i < 4; i++) {
          const w = s * (0.4 + rnd() * 0.5);
          const h = s * (0.4 + rnd() * 0.5);
          ctx.fillRect(x - w / 2 + (rnd() - 0.5) * s * 0.7, y - h / 2 + (rnd() - 0.5) * s * 0.7, w, h);
        }
      });
    </script>
  </body>
</html>
